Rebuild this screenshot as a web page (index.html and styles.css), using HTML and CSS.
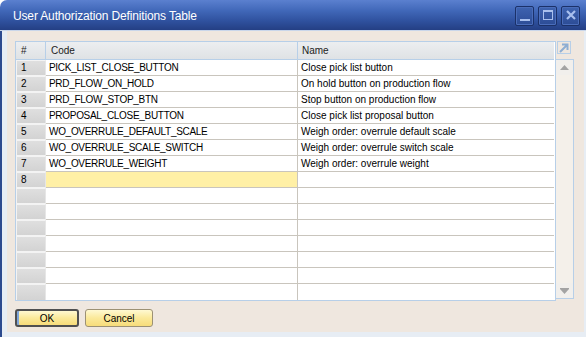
FILE: index.html
```html
<!DOCTYPE html>
<html>
<head>
<meta charset="utf-8">
<link rel="stylesheet" href="styles.css">
</head>
<body>
<div class="window">
  <div class="titlebar">
    <span class="title">User Authorization Definitions Table</span>
    <div class="wbtns">
      <span class="wbtn"><svg width="16" height="17" viewBox="0 0 16 17"><rect x="3" y="12" width="10" height="2" fill="#a9c0ee"/></svg></span>
      <span class="wbtn"><svg width="16" height="17" viewBox="0 0 16 17"><rect x="3.5" y="3.5" width="9" height="9" fill="none" stroke="#a9c0ee" stroke-width="1"/><rect x="3" y="3" width="10" height="2" fill="#a9c0ee"/></svg></span>
      <span class="wbtn"><svg width="16" height="17" viewBox="0 0 16 17"><path d="M4 4 L12 12 M12 4 L4 12" stroke="#a9c0ee" stroke-width="2.2"/></svg></span>
    </div>
  </div>
  <div class="frame">
    <div class="content">
      <div class="gridwrap">
        <div class="table">
          <div class="row head"><div class="c idx">#</div><div class="c code">Code</div><div class="c name">Name</div></div>
          <div class="row"><div class="c idx">1</div><div class="c code">PICK_LIST_CLOSE_BUTTON</div><div class="c name">Close pick list button</div></div>
          <div class="row"><div class="c idx">2</div><div class="c code">PRD_FLOW_ON_HOLD</div><div class="c name">On hold button on production flow</div></div>
          <div class="row"><div class="c idx">3</div><div class="c code">PRD_FLOW_STOP_BTN</div><div class="c name">Stop button on production flow</div></div>
          <div class="row"><div class="c idx">4</div><div class="c code">PROPOSAL_CLOSE_BUTTON</div><div class="c name">Close pick list proposal button</div></div>
          <div class="row"><div class="c idx">5</div><div class="c code">WO_OVERRULE_DEFAULT_SCALE</div><div class="c name">Weigh order: overrule default scale</div></div>
          <div class="row"><div class="c idx">6</div><div class="c code">WO_OVERRULE_SCALE_SWITCH</div><div class="c name">Weigh order: overrule switch scale</div></div>
          <div class="row"><div class="c idx">7</div><div class="c code">WO_OVERRULE_WEIGHT</div><div class="c name">Weigh order: overrule weight</div></div>
          <div class="row"><div class="c idx">8</div><div class="c code active"></div><div class="c name"></div></div>
          <div class="row"><div class="c idx"></div><div class="c code"></div><div class="c name"></div></div>
          <div class="row"><div class="c idx"></div><div class="c code"></div><div class="c name"></div></div>
          <div class="row"><div class="c idx"></div><div class="c code"></div><div class="c name"></div></div>
          <div class="row"><div class="c idx"></div><div class="c code"></div><div class="c name"></div></div>
          <div class="row"><div class="c idx"></div><div class="c code"></div><div class="c name"></div></div>
          <div class="row"><div class="c idx"></div><div class="c code"></div><div class="c name"></div></div>
          <div class="row last"><div class="c idx"></div><div class="c code"></div><div class="c name"></div></div>
        </div>
        <div class="side">
          <div class="expand"><svg width="12" height="11" viewBox="0 0 12 11"><path d="M2 10 L9 3 M4 2.5 H9.5 V8" stroke="#8eaed3" stroke-width="2" fill="none"/></svg></div>
          <div class="scroll">
            <div class="sbtn"><svg width="9" height="5" viewBox="0 0 9 5"><path d="M0 5 L4.5 0 L9 5 Z" fill="#a3a3a3"/></svg></div>
            <div class="track"></div>
            <div class="sbtn down"><svg width="9" height="6" viewBox="0 0 9 6"><rect x="0" y="0" width="9" height="1" fill="#a3a3a3"/><path d="M0 1 L4.5 6 L9 1 Z" fill="#a3a3a3"/></svg></div>
          </div>
        </div>
      </div>
      <div class="buttons">
        <button class="btn ok">OK</button>
        <button class="btn cancel">Cancel</button>
      </div>
    </div>
  </div>
</div>
</body>
</html>
```
FILE: styles.css
```css
html, body {
  margin: 0;
  padding: 0;
  background: #ffffff;
}
.window {
  width: 586px;
  height: 337px;
  display: flex;
  flex-direction: column;
  font-family: "Liberation Sans", Arial, sans-serif;
  overflow: hidden;
}
.titlebar {
  height: 30px;
  flex: none;
  display: flex;
  align-items: center;
  justify-content: space-between;
  background: linear-gradient(#5b80cf 0%, #4168b9 35%, #2f519e 70%, #243f84 100%);
  border-top-left-radius: 7px;
  padding: 0 6px 0 13px;
  border-bottom: 1px solid #c9d6ea;
}
.title {
  color: #ffffff;
  font-size: 12px;
  letter-spacing: -0.15px;
  padding-top: 2px;
}
.wbtns {
  display: flex;
  gap: 4px;
  padding-top: 1px;
}
.wbtn {
  width: 17px;
  height: 18px;
  border: 1px solid #1b3169;
  border-radius: 2px;
  background: linear-gradient(#3e63b0, #2c4c96);
  box-shadow: inset 0 0 0 1px #4a6dba;
  display: flex;
  align-items: center;
  justify-content: center;
}
.frame {
  flex: 1;
  display: flex;
  border-left: 2px solid #2c4a8e;
  background: #e7edf4;
  padding: 0 5px 5px 5px;
}
.content {
  flex: 1;
  background: #efe7df;
  padding: 10px 10px 0 8px;
  display: flex;
  flex-direction: column;
}
.gridwrap {
  display: flex;
}
.table {
  width: 539px;
  border: 1px solid #b7cfe8;
  background: #ffffff;
  font-size: 10px;
  color: #000;
}
.row {
  display: grid;
  grid-template-columns: 30px 252px 256px;
  height: 16px;
}
.row.head {
  height: 18px;
}
.c {
  box-sizing: border-box;
  border-bottom: 1px solid #c9c5bd;
  padding-left: 3px;
  line-height: 15px;
  white-space: nowrap;
  overflow: hidden;
}
.row.last .c {
  border-bottom: none;
}
.c.idx {
  padding-left: 4px;
  background: linear-gradient(#dfdfdf, #d3d3d3);
  border: 1px solid #f3f3f3;
  border-right-color: #e6e6e6;
  line-height: 13px;
}
.c.code {
  border-right: 1px solid #c9c5bd;
  letter-spacing: -0.3px;
}
.c.active {
  background: #fff0a6;
}
.row.head .c {
  background: linear-gradient(#eceef0, #dfe2e5);
  border: none;
  border-bottom: 1px solid #b7cfe8;
  border-right: 1px solid #b7cfe8;
  line-height: 17px;
  color: #222;
  letter-spacing: 0;
}
.row.head .c.idx {
  padding-left: 5px;
}
.row.head .c.code {
  padding-left: 5px;
}
.row.head .c.name {
  border-right: none;
  padding-left: 4px;
}
.side {
  width: 18px;
  display: flex;
  flex-direction: column;
}
.expand {
  width: 12px;
  height: 11px;
  margin: 0 0 5px 1px;
  border: 1px solid #b7cfe8;
  display: flex;
  align-items: center;
  justify-content: center;
}
.scroll {
  margin-left: -1px;
  height: 240px;
  box-sizing: border-box;
  border: 1px solid #b7cfe8;
  background: #f4f0ea;
  display: flex;
  flex-direction: column;
}
.sbtn {
  height: 15px;
  display: flex;
  align-items: center;
  justify-content: center;
  background: #f1efec;
}
.track {
  flex: 1;
}
.buttons {
  display: flex;
  gap: 6px;
  margin-top: 8px;
}
.btn {
  box-sizing: border-box;
  height: 18px;
  font-family: "Liberation Sans", Arial, sans-serif;
  font-size: 10px;
  color: #000;
  background: linear-gradient(#fff9d2, #fbe99a 50%, #f7dc7a);
  border: 1px solid #9c9174;
  border-radius: 3px;
  padding: 0;
}
.btn.ok {
  width: 64px;
  border: 2px solid #505050;
  box-shadow: inset 2px 0 0 #7fa6dc;
}
.btn.cancel {
  width: 68px;
}
```
